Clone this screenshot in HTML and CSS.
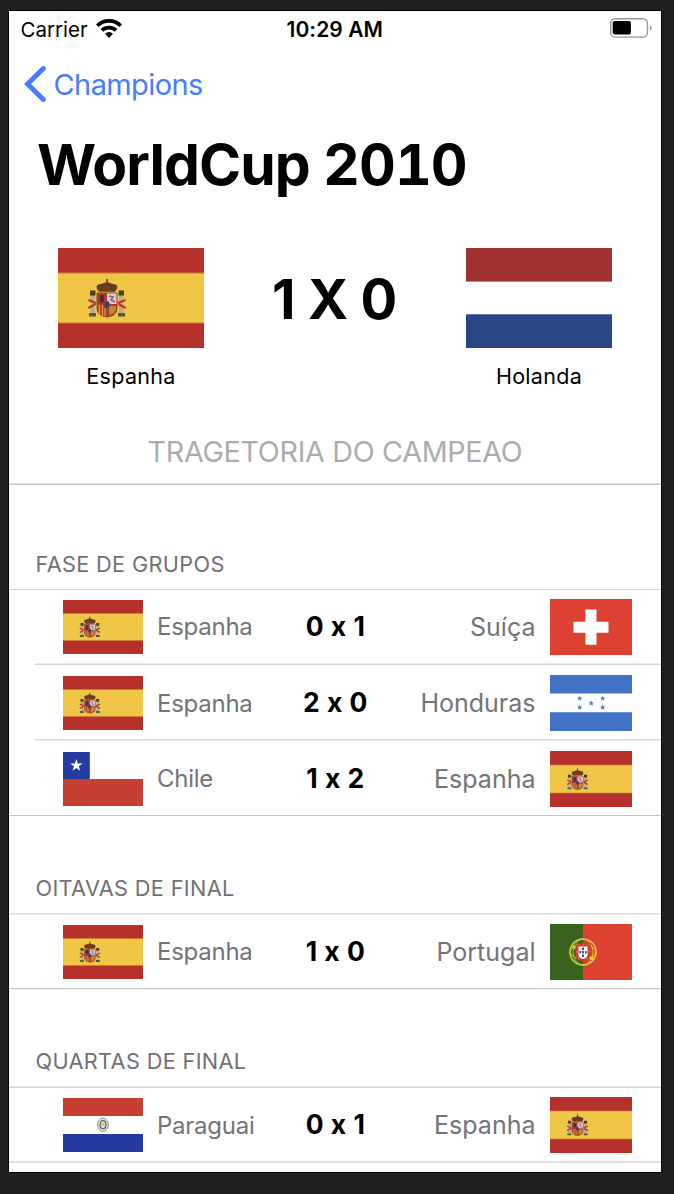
FILE: index.html
```html
<!DOCTYPE html>
<html lang="pt">
<head>
<meta charset="utf-8">
<title>WorldCup 2010</title>
<link rel="stylesheet" href="styles.css">
</head>
<body>
<svg class="defs" width="0" height="0" aria-hidden="true">
  <symbol id="spain" viewBox="0 0 146 100" preserveAspectRatio="none">
    <rect width="146" height="100" fill="#b7312c"/>
    <rect y="25" width="146" height="50" fill="#f0c647"/>
    <path d="M0 25h146M0 75h146" stroke="#cf7b32" stroke-width="1"/>
    <g>
      <path d="M32.500 47h4.500v19h-4.500zM61 47h4.500v19h-4.500z" fill="#b9ae8c"/>
      <path d="M32 42.500h5.500v5h-5.500zM60.500 42.500h5.500v5h-5.500z" fill="#4b3d1a"/>
      <path d="M31 65h7v3.500h-7zM60 65h7v3.500h-7z" fill="#4e5a4c"/>
      <path d="M30.500 52l7.500 3M30.500 60l7-4M67.500 52l-7.500 3M67.500 60l-7-4" stroke="#b4362b" stroke-width="2.200"/>
      <path d="M40 43q-4-7 3-7l6-2 6 2q7 0 3 7z" fill="#83391f"/>
      <path d="M39.500 39q9.500-4.500 19 0M41 43h16M49 31v6M44 36v6M54 36v6" stroke="#4c421e" stroke-width="1.600" fill="none"/>
      <path d="M39 45h20v15q0 8-10 9q-10-1-10-9z" fill="#b5372b" stroke="#7a5324" stroke-width="1"/>
      <path d="M49 45.500h9.500v10.500h-9.500z" fill="#dccdd0"/>
      <path d="M51 48l4 1-2 3 4 2" stroke="#885a7c" stroke-width="1.500" fill="none"/>
      <path d="M42 47h4v7h-4z" fill="#3e3141"/>
      <path d="M41.500 57v9M44.500 57v11M47 60v8" stroke="#dfa83a" stroke-width="1.200"/>
      <path d="M51 58h7v3q-1 5-7 6z" fill="#b98b38"/>
      <ellipse cx="49" cy="56.500" rx="2.700" ry="3.500" fill="#35446a"/>
    </g>
  </symbol>
  <symbol id="netherlands" viewBox="0 0 146 100" preserveAspectRatio="none">
    <rect width="146" height="100" fill="#fff"/>
    <rect width="146" height="33.600" fill="#a03131"/>
    <rect y="66.300" width="146" height="33.700" fill="#294785"/>
  </symbol>
  <symbol id="switzerland" viewBox="0 0 82 56" preserveAspectRatio="none">
    <rect width="82" height="56" fill="#dd4132"/>
    <path d="M35.500 10.500h11v12.300h12v11h-12v12h-11v-12h-12v-11h12z" fill="#fff"/>
  </symbol>
  <symbol id="honduras" viewBox="0 0 82 56" preserveAspectRatio="none">
    <rect width="82" height="56" fill="#fff"/>
    <path d="M0 0h82v18.500h-82zM0 37.300h82v18.700h-82z" fill="#4272c6"/>
    <g fill="#4280d6">
      <path id="hstar" d="M0-2.800l.8 2h2l-1.600 1.300.6 2.200-1.800-1.300-1.800 1.300.6-2.200-1.600-1.300h2z" transform="translate(29.700 23.200)"/>
      <use href="#hstar" x="23"/>
      <use href="#hstar" x="11.500" y="4.800"/>
      <use href="#hstar" y="9"/>
      <use href="#hstar" x="23" y="9"/>
    </g>
  </symbol>
  <symbol id="chile" viewBox="0 0 80 54" preserveAspectRatio="none">
    <rect width="80" height="54" fill="#fff"/>
    <rect y="27" width="80" height="27" fill="#c54032"/>
    <rect width="26.800" height="27" fill="#243ca0"/>
    <path d="M13.400 7l1.500 4.500h4.700l-3.800 2.800 1.400 4.500-3.800-2.800-3.800 2.800 1.400-4.500-3.800-2.800h4.700z" fill="#fff"/>
  </symbol>
  <symbol id="portugal" viewBox="0 0 82 56" preserveAspectRatio="none">
    <rect width="82" height="56" fill="#dd4132"/>
    <rect width="33" height="56" fill="#39631d"/>
    <g fill="none" stroke="#d9cf3c">
      <circle cx="33" cy="28" r="13" stroke-width="1.500"/>
      <ellipse cx="33" cy="28" rx="10" ry="12.800" stroke-width=".8"/>
      <ellipse cx="33" cy="28" rx="12.800" ry="7" stroke-width=".9"/>
      <path d="M22.500 22l4 2M38.500 33l5 2" stroke-width="3"/>
    </g>
    <path d="M25.500 19.500h15v11q0 5.500-7.500 7q-7.500-1.500-7.500-7z" fill="#d83a30"/>
    <path d="M26 20.500h2.500M37.500 20.500h2.500M26 27.500h2M38 27.500h2M28 34.500h2M36 34.500h2M32 20.500h2" stroke="#a97a35" stroke-width="1.600"/>
    <path d="M28.500 22.500h9v8q0 3.500-4.500 4.500q-4.500-1-4.500-4.500z" fill="#fff"/>
    <path d="M32 23.500h2v2.500h-2zM32 27h2v2.500h-2zM32 30.500h2v2.500h-2zM29.300 27h1.700v2.500h-1.700zM35 27h1.700v2.500h-1.700z" fill="#3252a8"/>
  </symbol>
  <symbol id="paraguay" viewBox="0 0 80 54" preserveAspectRatio="none">
    <rect width="80" height="54" fill="#fff"/>
    <rect width="80" height="18" fill="#c54032"/>
    <rect y="36" width="80" height="18" fill="#243ca0"/>
    <ellipse cx="40" cy="26.800" rx="5.300" ry="6.700" fill="#eee" stroke="#8d8d8d" stroke-width="1"/>
    <ellipse cx="40" cy="26.800" rx="2.900" ry="4.100" fill="#dde3dc" stroke="#566653" stroke-width="1.300"/>
    <circle cx="40" cy="26.500" r="1.200" fill="#d6bd3f"/>
  </symbol>
</svg>

<main class="phone">
  <header class="status">
    <div class="carrier">
      <span class="carrier-name">Carrier</span>
      <svg class="wifi" viewBox="0 0 26 20">
        <path d="M1.300 6.800a16.500 16.500 0 0 1 23.400 0M5.900 11.400a10.400 10.400 0 0 1 14.200 0" fill="none" stroke="#000" stroke-width="3.700"/>
        <path d="M13 19l-4-4.200q4-3.600 8 0z"/>
      </svg>
    </div>
    <span class="time">10:29 AM</span>
    <svg class="battery" viewBox="0 0 42 20">
      <rect x=".7" y=".7" width="36.800" height="18.400" rx="4.600" fill="none" stroke="#989898" stroke-width="1.400"/>
      <rect x="2.700" y="3" width="18.200" height="13.600" rx="2" fill="#000"/>
      <path d="M40 7q1.600 1 1.600 3t-1.600 3z" fill="#989898"/>
    </svg>
  </header>

  <nav class="nav">
    <svg class="chevron" viewBox="0 0 24 36"><path d="M19.300 2.500L3.500 18l15.800 15.500" fill="none" stroke="#457dff" stroke-width="5" stroke-linecap="round"/></svg>
    <a class="back">Champions</a>
  </nav>

  <h1 class="title">WorldCup 2010</h1>

  <section class="final">
    <div class="team"><svg class="flag-lg"><use href="#spain"/></svg><span class="team-name">Espanha</span></div>
    <div class="final-score">1 X 0</div>
    <div class="team"><svg class="flag-lg"><use href="#netherlands"/></svg><span class="team-name">Holanda</span></div>
  </section>

  <h2 class="path-title"><span>TRAGETORIA DO CAMPEAO</span></h2>
  <div class="rule rule-strong"></div>

  <section class="group">
    <h3 class="group-title g1"><span>FASE DE GRUPOS</span></h3>
    <div class="rule rule-single"></div>
    <div class="match"><svg class="flag"><use href="#spain"/></svg><span class="home">Espanha</span><b class="score">0 x 1</b><span class="away">Suíça</span><svg class="flag flag-away"><use href="#switzerland"/></svg></div>
    <div class="rule rule-rise inset"></div>
    <div class="match low2"><svg class="flag"><use href="#spain"/></svg><span class="home">Espanha</span><b class="score">2 x 0</b><span class="away">Honduras</span><svg class="flag flag-away"><use href="#honduras"/></svg></div>
    <div class="rule rule-fall inset"></div>
    <div class="match tall low1"><svg class="flag"><use href="#chile"/></svg><span class="home">Chile</span><b class="score">1 x 2</b><span class="away">Espanha</span><svg class="flag flag-away"><use href="#spain"/></svg></div>
    <div class="rule rule-single dark"></div>
  </section>

  <section class="group">
    <h3 class="group-title g2"><span>OITAVAS DE FINAL</span></h3>
    <div class="rule rule-fall"></div>
    <div class="match"><svg class="flag"><use href="#spain"/></svg><span class="home">Espanha</span><b class="score">1 x 0</b><span class="away">Portugal</span><svg class="flag flag-away"><use href="#portugal"/></svg></div>
    <div class="rule rule-fall dark"></div>
  </section>

  <section class="group">
    <h3 class="group-title g3"><span>QUARTAS DE FINAL</span></h3>
    <div class="rule rule-rise"></div>
    <div class="match low1"><svg class="flag"><use href="#paraguay"/></svg><span class="home">Paraguai</span><b class="score">0 x 1</b><span class="away">Espanha</span><svg class="flag flag-away"><use href="#spain"/></svg></div>
    <div class="rule rule-even"></div>
  </section>
</main>
</body>
</html>
```

FILE: styles.css
```css
* { box-sizing: border-box; }

body {
  margin: 0;
  height: 1194px;
  padding: 10px 12px 21px 8px;
  background: #1f1f1f;
  font-family: Inter, "Liberation Sans", sans-serif;
  font-feature-settings: "calt" 0;
  overflow: hidden;
}

.defs { position: absolute; }

.phone {
  height: 1163px;
  width: 654px;
  border: 1px solid #000;
  background: #fff;
  color: #000;
  overflow: hidden;
  white-space: nowrap;
}

h1, h2, h3 { margin: 0; }
svg { display: block; flex: none; }

.status {
  height: 36px;
  padding: 0 9px 0 11.500px;
  display: grid;
  grid-template-columns: 1fr auto 1fr;
  align-items: center;
  font-size: 20.500px;
}
.carrier { display: flex; align-items: center; gap: 8px; }
.wifi { width: 26px; height: 20px; }
.time { font-weight: 600; font-size: 21px; letter-spacing: .1px; margin-right: 3px; }
.battery { width: 42px; height: 20px; justify-self: end; margin-top: -2px; }

.nav {
  height: 74px;
  padding-left: 14.500px;
  display: flex;
  align-items: center;
  gap: 6px;
}
.chevron { width: 24px; height: 36px; }
.back { color: #457dff; font-size: 29px; letter-spacing: -.6px; }

.title {
  height: 86px;
  padding-left: 28px;
  font-size: 57px;
  line-height: 87px;
  font-weight: 700;
  letter-spacing: -.95px;
  word-spacing: -1px;
  font-variant-numeric: tabular-nums;
}

.final {
  height: 211px;
  padding: 41px 49px 0;
  display: flex;
  justify-content: space-between;
}
.team { width: 146px; display: flex; flex-direction: column; align-items: center; }
.flag-lg { width: 146px; height: 100px; }
.team-name { margin-top: 13px; line-height: 30px; font-size: 21.500px; letter-spacing: .3px; }
.final-score { margin-right: 1px; line-height: 102px; font-size: 54.500px; font-weight: 700; letter-spacing: -.3px; }

.path-title {
  height: 65px;
  line-height: 67px;
  text-align: center;
  font-size: 28.700px;
  font-weight: 400;
  letter-spacing: -.3px;
  color: #acacac;
}

.rule { height: 2px; }
.rule-strong { background: linear-gradient(#e2e2e2 50%, #c4c4c6 50%); }
.rule-single { height: 1px; background: #d0d0d2; }
.rule-rise { background: linear-gradient(#ebebec 50%, #d2d2d4 50%); }
.rule-fall { background: linear-gradient(#dcdcde 50%, #efeff0 50%); }
.rule-even { background: #e1e1e3; }
.rule-single.dark { background: #c4c4c6; }
.rule-fall.dark { background: linear-gradient(#cbcbcd 50%, #efeff0 50%); }
.inset { margin-left: 26px; }

.group-title {
  padding-left: 26.500px;
  display: flex;
  align-items: flex-end;
  font-size: 21.700px;
  font-weight: 400;
  letter-spacing: .35px;
  line-height: 26px;
  color: #717176;
}
.g1 { height: 104px; padding-bottom: 12px; }
.g2 { height: 97px; padding-bottom: 12px; }
.g3 { height: 96px; padding-bottom: 12px; }

.match {
  height: 73px;
  padding: 0 29px 0 54px;
  display: grid;
  grid-template-columns: 80px 124px 137px 1fr 82px;
  align-items: center;
}
.match.low1 { padding-top: 1px; }
.match.low2 { height: 74px; padding-top: 2px; }
.match.tall { height: 74px; }
.flag { width: 80px; height: 54px; }
.flag-away { width: 82px; height: 56px; }
.home { padding-left: 14px; font-size: 24px; letter-spacing: -.25px; color: #737379; }
.away { padding-right: 14.500px; text-align: right; font-size: 25px; letter-spacing: 0; color: #737379; }
.score { text-align: center; font-size: 26.500px; font-weight: 700; margin-top: -2px; letter-spacing: .5px; }
```
